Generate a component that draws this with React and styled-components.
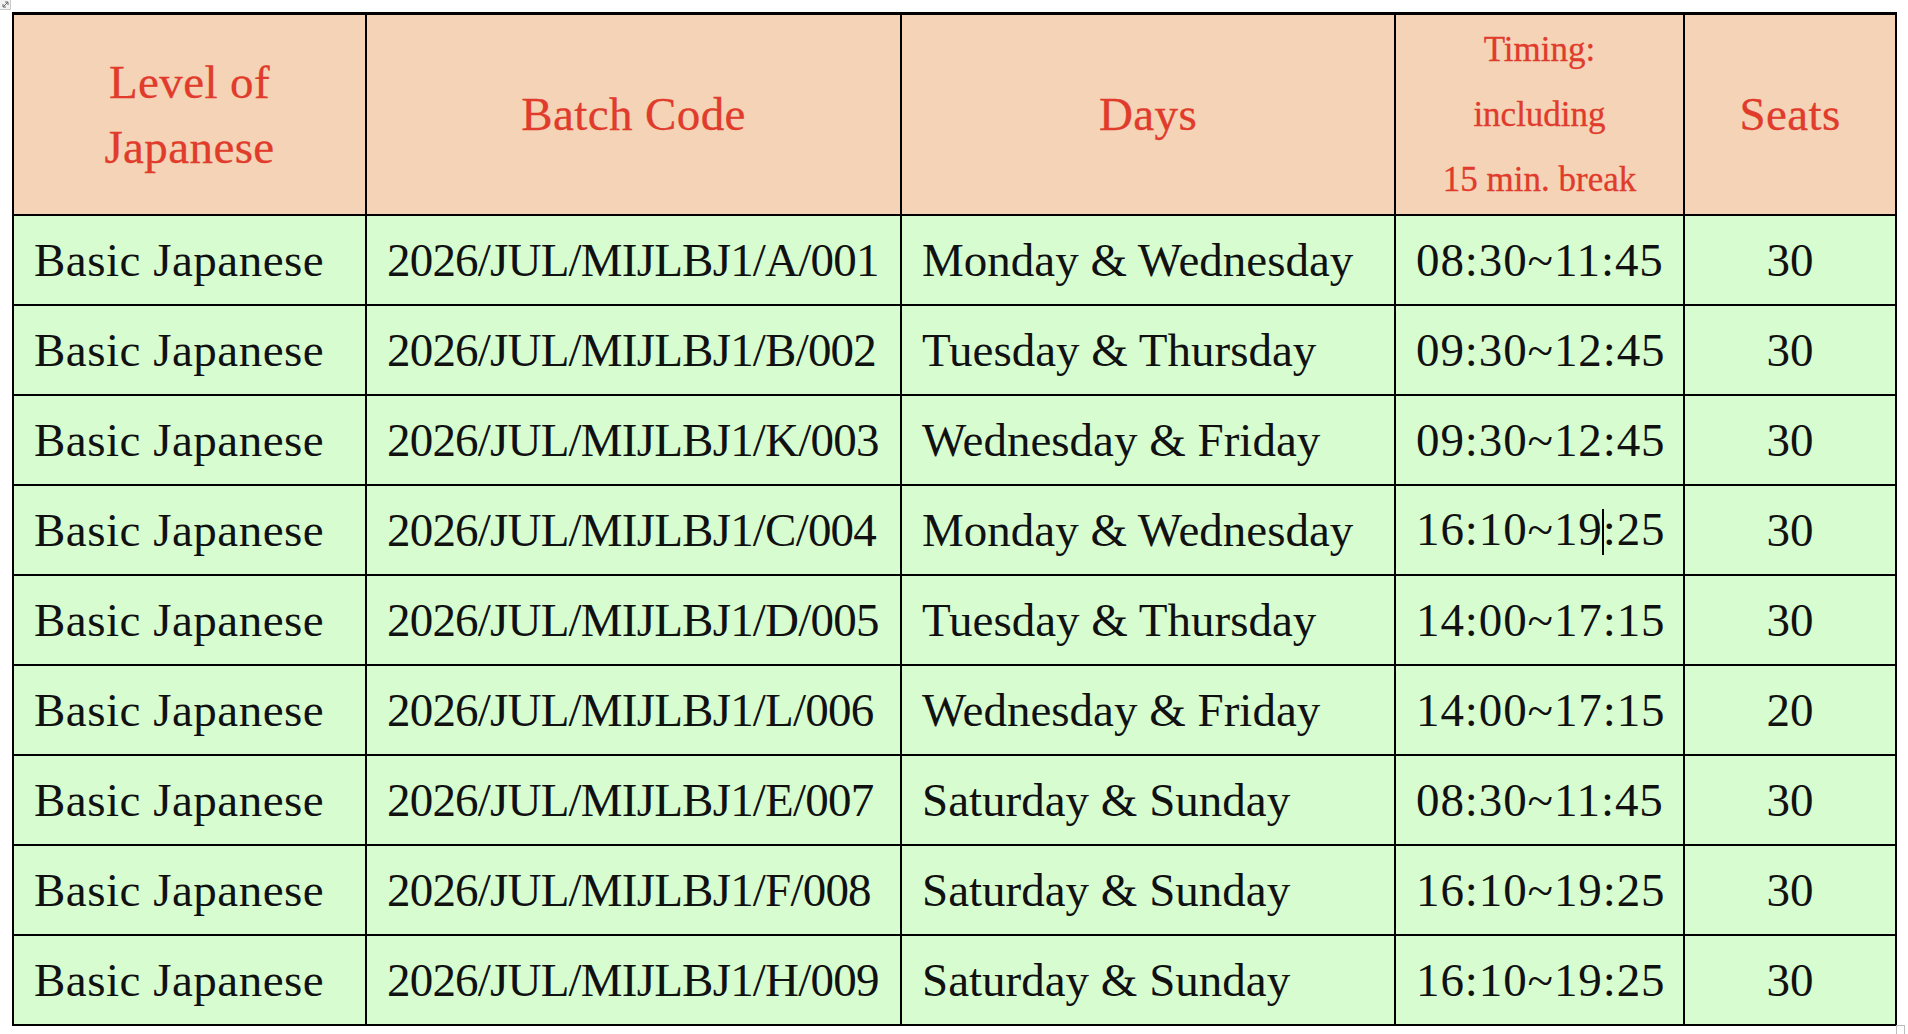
import React from "react";
import styled, { createGlobalStyle } from "styled-components";

const GlobalStyle = createGlobalStyle`
    html, body {
        margin: 0;
        padding: 0;
        background: #ffffff;
    }
    body {
        font-family: "Liberation Serif", "Times New Roman", serif;
    }
`;

const Page = styled.div`
    position: relative;
    padding: 12px 0 0 12px;
    width: 1908px;
    height: 1034px;
    box-sizing: border-box;
`;

// the little table-move handle of the word processor
const MoveHandle = styled.div`
    position: absolute;
    left: 0;
    top: 0;
    width: 10px;
    height: 9px;
    border: 1px solid #c9c9c9;
    border-top: none;
    border-left: none;
    background: #f2f2f2;
    display: flex;
    align-items: center;
    justify-content: center;
`;

const ResizeHandle = styled.div`
    position: absolute;
    left: 1896px;
    top: 1025px;
    width: 7px;
    height: 9px;
    border: 1px solid #bdbdbd;
    border-bottom: none;
    background: #ffffff;
`;

const Table = styled.table`
    border-collapse: collapse;
    table-layout: fixed;
    width: 1883px;
    border-top: 3px solid #000;
    font-family: "Liberation Serif", "Times New Roman", serif;
`;

const HeadCell = styled.th`
    height: 199px;
    padding: 0;
    background: #f4d3b7;
    color: #e03b2b;
    font-weight: normal;
    font-size: ${(p) => (p.$small ? "35px" : "47px")};
    line-height: 65px;
    letter-spacing: ${(p) => (p.$small ? "0" : "0.4px")};
    text-align: center;
    vertical-align: middle;
    border: 2px solid #000;
    border-top: none;
    -webkit-text-stroke: 0.3px #e03b2b;
`;

const Cell = styled.td`
    height: 88px;
    padding: 0 0 0 ${(p) => (p.$center ? "0" : "20px")};
    background: #d6fcd0;
    color: #111;
    font-size: 47px;
    line-height: 1;
    letter-spacing: ${(p) => p.$spacing || "0"};
    text-align: ${(p) => (p.$center ? "center" : "left")};
    vertical-align: middle;
    border: 2px solid #000;
    white-space: nowrap;
    overflow: hidden;
`;

const Caret = styled.span`
    display: inline-block;
    width: 2px;
    height: 46px;
    margin: 0 -1px;
    background: #000;
    vertical-align: -10px;
`;

const rows = [
    ["2026/JUL/MIJLBJ1/A/001", "Monday & Wednesday", "08:30~11:45", "30"],
    ["2026/JUL/MIJLBJ1/B/002", "Tuesday & Thursday", "09:30~12:45", "30"],
    ["2026/JUL/MIJLBJ1/K/003", "Wednesday & Friday", "09:30~12:45", "30"],
    ["2026/JUL/MIJLBJ1/C/004", "Monday & Wednesday", "16:10~19:25", "30"],
    ["2026/JUL/MIJLBJ1/D/005", "Tuesday & Thursday", "14:00~17:15", "30"],
    ["2026/JUL/MIJLBJ1/L/006", "Wednesday & Friday", "14:00~17:15", "20"],
    ["2026/JUL/MIJLBJ1/E/007", "Saturday & Sunday", "08:30~11:45", "30"],
    ["2026/JUL/MIJLBJ1/F/008", "Saturday & Sunday", "16:10~19:25", "30"],
    ["2026/JUL/MIJLBJ1/H/009", "Saturday & Sunday", "16:10~19:25", "30"],
];

const App = () => {
    return (
        <Page>
            <GlobalStyle />
            <MoveHandle>
                <svg width="7" height="7" viewBox="0 0 7 7">
                    <path d="M1 6 L6 1 M3 1 H6 V4 M1 3 V6 H4" stroke="#666" strokeWidth="1" fill="none" />
                </svg>
            </MoveHandle>
            <Table>
                <colgroup>
                    <col style={{ width: 353 }} />
                    <col style={{ width: 535 }} />
                    <col style={{ width: 494 }} />
                    <col style={{ width: 289 }} />
                    <col style={{ width: 212 }} />
                </colgroup>
                <thead>
                    <tr>
                        <HeadCell>
                            Level of
                            <br />
                            Japanese
                        </HeadCell>
                        <HeadCell>Batch Code</HeadCell>
                        <HeadCell>Days</HeadCell>
                        <HeadCell $small>
                            Timing:
                            <br />
                            including
                            <br />
                            15 min. break
                        </HeadCell>
                        <HeadCell>Seats</HeadCell>
                    </tr>
                </thead>
                <tbody>
                    {rows.map((r, i) => (
                        <tr key={r[0]}>
                            <Cell $spacing="0.5px">Basic Japanese</Cell>
                            <Cell $spacing="-0.8px">{r[0]}</Cell>
                            <Cell>{r[1]}</Cell>
                            <Cell $spacing="0.9px">
                                {i === 3 ? (
                                    <>
                                        16:10~19
                                        <Caret />
                                        :25
                                    </>
                                ) : (
                                    r[2]
                                )}
                            </Cell>
                            <Cell $center>{r[3]}</Cell>
                        </tr>
                    ))}
                </tbody>
            </Table>
            <ResizeHandle />
        </Page>
    );
};

export default App;
